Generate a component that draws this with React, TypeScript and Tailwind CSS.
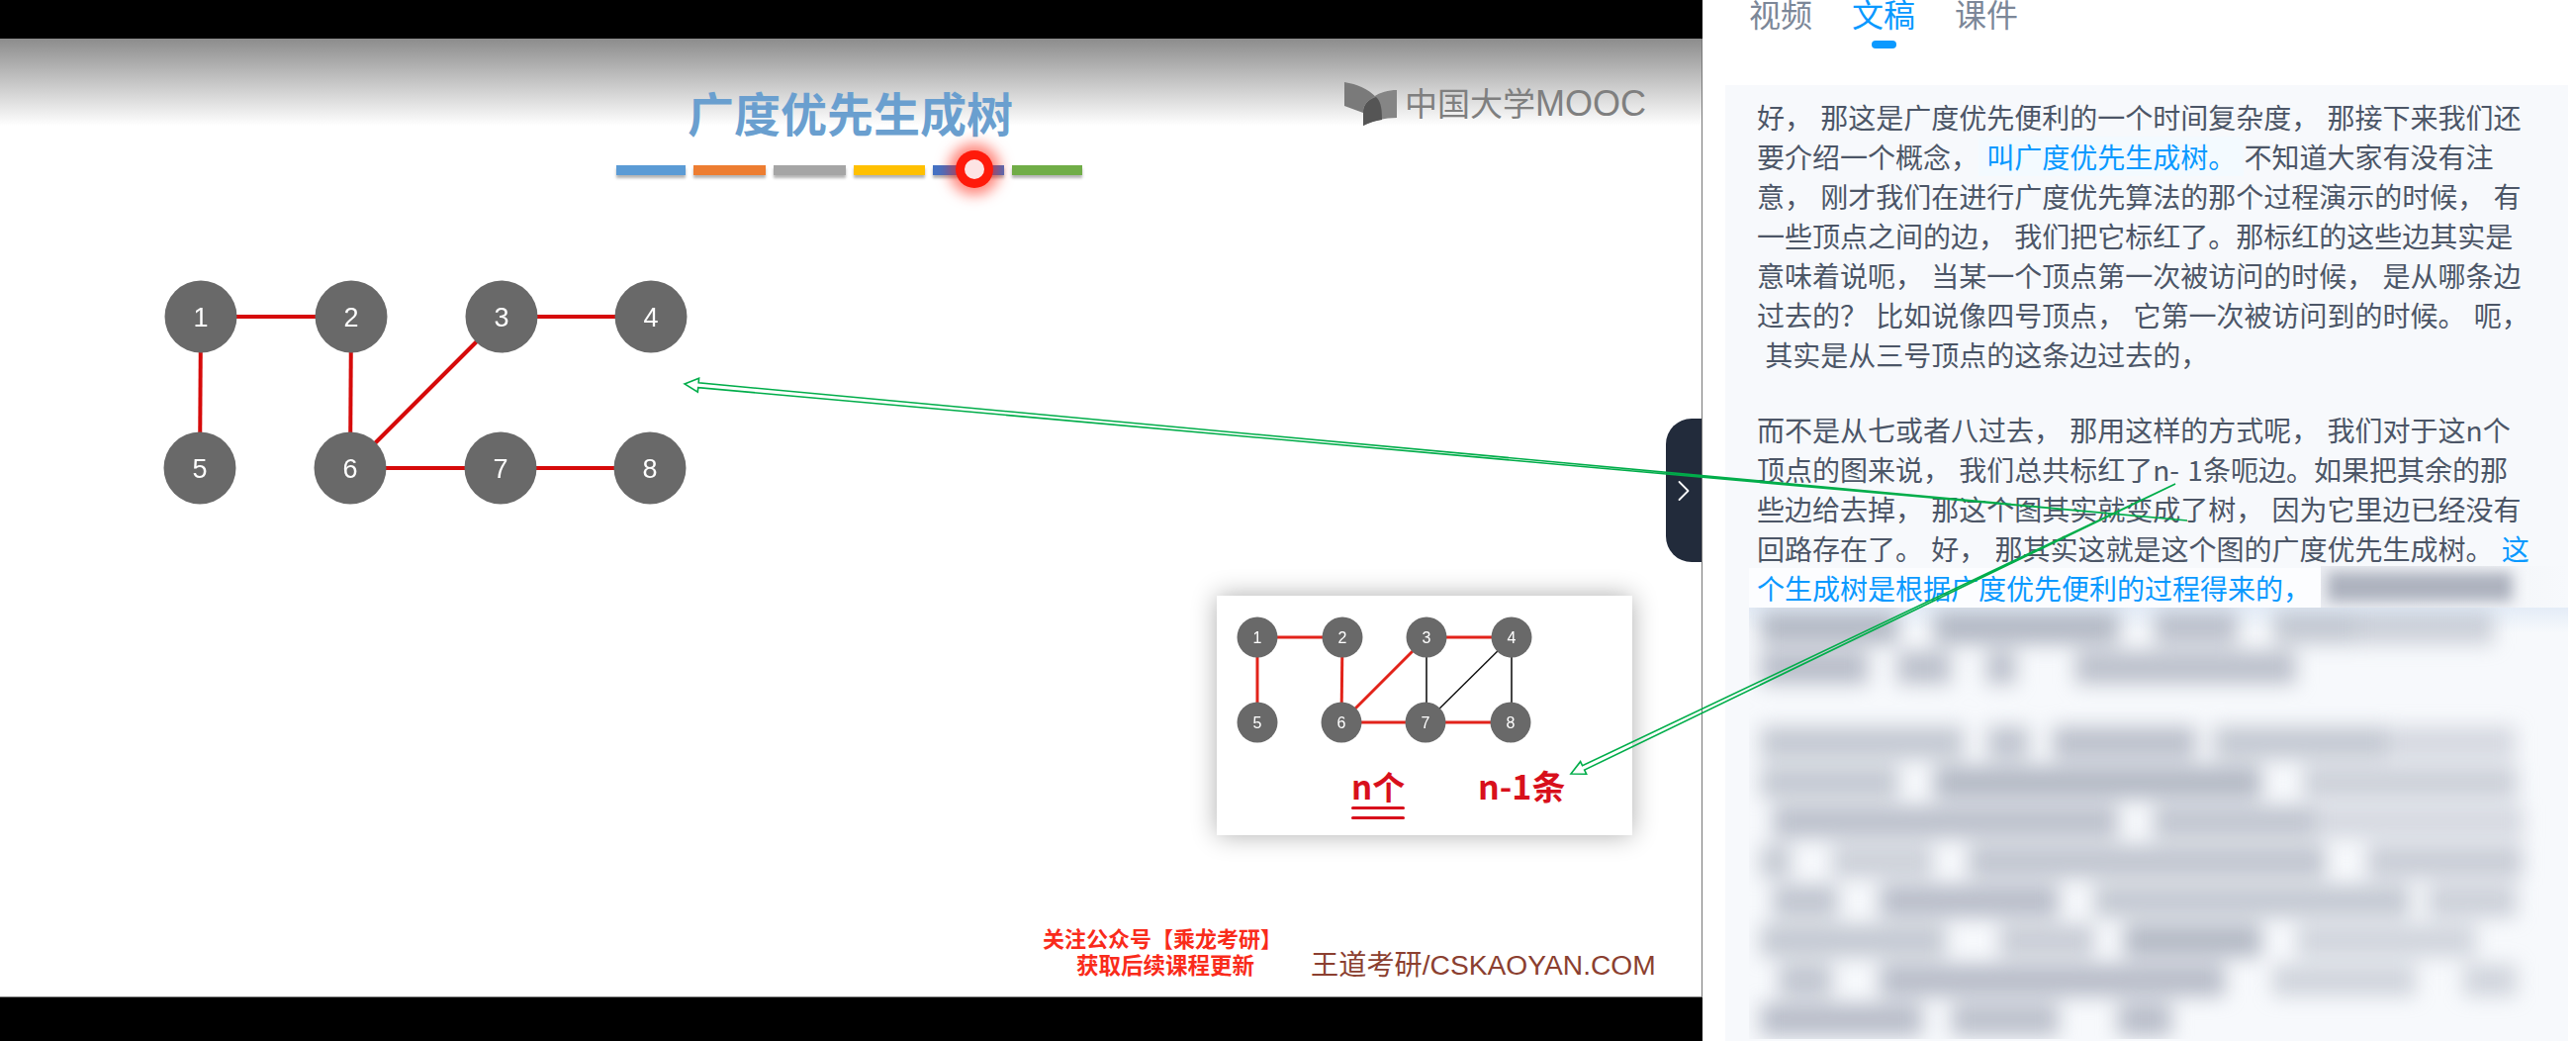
import { ChevronRight } from "lucide-react";

type Pt = [number, number];

const EDGES: [Pt, Pt][] = [
  [[203, 45], [355, 45]],
  [[507, 45], [658, 45]],
  [[203, 45], [202, 198]],
  [[355, 45], [354, 198]],
  [[507, 45], [354, 198]],
  [[354, 198], [506, 198]],
  [[506, 198], [657, 198]],
];

const NODES: [string, number, number][] = [
  ["1", 203, 45],
  ["2", 355, 45],
  ["3", 507, 45],
  ["4", 658, 45],
  ["5", 202, 198],
  ["6", 354, 198],
  ["7", 506, 198],
  ["8", 657, 198],
];

const THUMB_RED: [Pt, Pt][] = [
  [[41, 42], [127, 42]],
  [[212, 42], [298, 42]],
  [[41, 42], [41, 128]],
  [[127, 42], [126, 128]],
  [[212, 42], [126, 128]],
  [[126, 128], [211, 128]],
  [[211, 128], [297, 128]],
];

const THUMB_NODES: [string, number, number][] = [
  ["1", 41, 42],
  ["2", 127, 42],
  ["3", 212, 42],
  ["4", 298, 42],
  ["5", 41, 128],
  ["6", 126, 128],
  ["7", 211, 128],
  ["8", 297, 128],
];

const BARS = [
  "w-[70px] bg-[#5b9bd5]",
  "w-[73px] bg-[#ed7d31]",
  "w-[73px] bg-[#a5a5a5]",
  "w-[72px] bg-[#ffc000]",
  "w-[72px] bg-[#4472c4]",
  "w-[71px] bg-[#70ad47]",
];

const PARA_ONE = [
  "好， 那这是广度优先便利的一个时间复杂度， 那接下来我们还",
  null,
  "意， 刚才我们在进行广度优先算法的那个过程演示的时候， 有",
  "一些顶点之间的边， 我们把它标红了。那标红的这些边其实是",
  "意味着说呃， 当某一个顶点第一次被访问的时候， 是从哪条边",
  "过去的？ 比如说像四号顶点， 它第一次被访问到的时候。 呃，",
  " 其实是从三号顶点的这条边过去的，",
];

const PARA_TWO = [
  "而不是从七或者八过去， 那用这样的方式呢， 我们对于这n个",
  "顶点的图来说， 我们总共标红了n- 1条呃边。如果把其余的那",
  "些边给去掉， 那这个图其实就变成了树， 因为它里边已经没有",
];

// blurred transcript: [gap before, width, darkness]
const BLUR_TOP: [number, number, number][][] = [
  [[12, 139, 0.8], [36, 187, 0.8], [36, 84, 0.7], [36, 84, 0.6], [0, 139, 0.5]],
  [[12, 108, 0.75], [30, 54, 0.7], [36, 30, 0.7], [60, 223, 0.7]],
];

const BLUR_BOTTOM: [number, number, number][][] = [
  [[12, 205, 0.6], [24, 42, 0.65], [24, 145, 0.7], [18, 175, 0.6], [0, 130, 0.4]],
  [[12, 139, 0.6], [36, 331, 0.8], [42, 217, 0.5]],
  [[24, 349, 0.7], [36, 163, 0.65], [0, 211, 0.4]],
  [[12, 30, 0.6], [42, 102, 0.5], [36, 361, 0.65], [42, 157, 0.55]],
  [[24, 66, 0.65], [42, 181, 0.75], [36, 319, 0.6], [18, 90, 0.5]],
  [[12, 187, 0.6], [54, 96, 0.55], [30, 139, 0.8], [36, 181, 0.45]],
  [[30, 54, 0.65], [48, 349, 0.75], [48, 145, 0.45], [48, 54, 0.45]],
  [[12, 163, 0.75], [30, 108, 0.7], [60, 54, 0.75]],
];

function arrowPoints(tip: Pt, tail: Pt, shaft: number) {
  const dx = tail[0] - tip[0];
  const dy = tail[1] - tip[1];
  const len = Math.hypot(dx, dy);
  const ux = dx / len;
  const uy = dy / len;
  const bx = tip[0] + ux * 14;
  const by = tip[1] + uy * 14;
  const off = (d: number) => `${bx - uy * d},${by + ux * d}`;
  return [
    tip.join(","),
    off(-7),
    off(-shaft),
    tail.join(","),
    off(shaft),
    off(7),
  ].join(" ");
}

function BlurLine({ segs }: { segs: [number, number, number][] }) {
  return (
    <div className="flex h-10 items-center">
      {segs.map(([gap, width, dark], i) => (
        <div
          key={i}
          className="h-[33px] shrink-0 bg-[#a4aab8]"
          style={{ marginLeft: gap, width, opacity: dark }}
        />
      ))}
    </div>
  );
}

function Slide() {
  return (
    <div className="h-[969px] overflow-hidden border-r border-b border-[#777777] bg-white bg-[linear-gradient(to_bottom,#8c8c8c_0px,#ffffff_88px)] font-['Noto_Sans_CJK_SC',sans-serif]">
      <div className="flex items-start pt-[47px] pl-[695px]">
        <h1 className="w-[329px] text-[47px] leading-[54px] font-bold whitespace-nowrap text-[#6a9fcf]">
          广度优先生成树
        </h1>
        <div className="ml-[335px] -mt-[3px] flex items-start gap-[7px]">
          <svg width="54" height="45" viewBox="0 0 54 45">
            <path d="M0 0 C13 2 24 7 32 15 C23 18 19 23 19 31 L0 24 Z" fill="#7a7a7a" />
            <path d="M53 8 L53 36 C41 36 28 39 19 44 L19 31 C19 18 36 8 53 8 Z" fill="#858585" />
            <path d="M32 15 C36 19 38 24 38 38 C31 39 25 41 19 44 L19 31 C19 23 23 18 32 15 Z" fill="#555555" />
          </svg>
          <span className="mt-[-2px] text-[33px] leading-[44px] whitespace-nowrap text-[#7f7f7f]">
            中国大学<span className="font-['Liberation_Sans',sans-serif] text-[36px]">MOOC</span>
          </span>
        </div>
      </div>

      <div className="relative mt-[27px] flex h-[10px] gap-[8px] pl-[623px]">
        {BARS.map((bar) => (
          <div key={bar} className={`h-[10px] shadow-[0_3px_3px_rgba(0,0,0,0.3)] ${bar}`} />
        ))}
        <div className="absolute top-[-15px] left-[966px] flex h-[38px] w-[38px] items-center justify-center rounded-full bg-[#ff1a0a] shadow-[0_0_14px_7px_rgba(255,30,10,0.55)]">
          <div className="h-[20px] w-[20px] rounded-full bg-[#fde4e4]" />
        </div>
      </div>

      <svg className="mt-[98px] blur-[0.4px]" width="700" height="240" viewBox="0 0 700 240">
        {EDGES.map(([a, b], i) => (
          <line key={i} x1={a[0]} y1={a[1]} x2={b[0]} y2={b[1]} stroke="#d60a0a" strokeWidth="4" />
        ))}
        {NODES.map(([label, x, y]) => (
          <g key={label}>
            <circle cx={x} cy={y} r="36.5" fill="#696969" />
            <text
              x={x}
              y={y + 10}
              textAnchor="middle"
              fontSize="27"
              fill="#ffffff"
              fontFamily="Liberation Sans, sans-serif"
            >
              {label}
            </text>
          </g>
        ))}
      </svg>

      <div className="mt-[87px] ml-[1230px] h-[242px] w-[420px] bg-white shadow-[0_0_24px_rgba(0,0,0,0.32)]">
        <svg className="block blur-[0.3px]" width="420" height="172" viewBox="0 0 420 172">
          {THUMB_RED.map(([a, b], i) => (
            <line key={i} x1={a[0]} y1={a[1]} x2={b[0]} y2={b[1]} stroke="#e2231a" strokeWidth="3" />
          ))}
          <line x1="212" y1="42" x2="212" y2="128" stroke="#444444" strokeWidth="2" />
          <line x1="298" y1="42" x2="298" y2="128" stroke="#444444" strokeWidth="2" />
          <line x1="298" y1="42" x2="211" y2="128" stroke="#111111" strokeWidth="1.5" />
          {THUMB_NODES.map(([label, x, y]) => (
            <g key={label}>
              <circle cx={x} cy={y} r="20.5" fill="#696969" />
              <text
                x={x}
                y={y + 6}
                textAnchor="middle"
                fontSize="16"
                fill="#ffffff"
                fontFamily="Liberation Sans, sans-serif"
              >
                {label}
              </text>
            </g>
          ))}
        </svg>
        <div className="flex items-start pl-[136px] text-[#d8101c]">
          <div className="w-[54px]">
            <div className="h-[40px] text-[33px] leading-[40px] font-bold whitespace-nowrap">n个</div>
            <div className="mt-[1px] h-[3px] rounded-full bg-[#d8101c]" />
            <div className="mt-[7px] h-[3px] rounded-full bg-[#d8101c]" />
          </div>
          <div className="ml-[74px] text-[34px] leading-[40px] font-bold whitespace-nowrap">n-1条</div>
        </div>
      </div>

      <div className="mt-[92px] flex items-end pl-[1054px] font-['Liberation_Sans','Noto_Sans_CJK_SC',sans-serif]">
        <div className="w-[240px] text-center text-[22px] leading-[27px] font-bold whitespace-nowrap text-[#f92b1b]">
          <div>关注公众号【乘龙考研】</div>
          <div className="pl-2 text-[22.5px]">获取后续课程更新</div>
        </div>
        <div className="ml-[31px] text-[28.2px] leading-[30px] whitespace-nowrap text-[#8b3f30]">
          王道考研/CSKAOYAN.COM
        </div>
      </div>
    </div>
  );
}

function Transcript() {
  return (
    <div className="ml-[23px] mr-[8px] mt-[30px] h-[966px] overflow-hidden bg-[#f7f9fc] pt-3 pl-8 text-[28px] leading-10 [word-spacing:2px] text-[#4c5667]">
      <div className="mb-9">
        {PARA_ONE.map((line, i) =>
          line === null ? (
            <div key={i} className="h-10 whitespace-pre">
              要介绍一个概念， <span className="mx-[-8px] bg-[#f3faff] px-2 text-[#0a99ff]">叫广度优先生成树。</span> 不知道大家有没有注
            </div>
          ) : (
            <div key={i} className="h-10 whitespace-pre">
              {line}
            </div>
          )
        )}
      </div>

      {PARA_TWO.map((line) => (
        <div key={line} className="h-10 whitespace-pre">
          {line}
        </div>
      ))}
      <div className="h-10 whitespace-pre">
        回路存在了。 好， 那其实这就是这个图的广度优先生成树。 <span className="text-[#0a99ff]">这</span>
      </div>
      <div className="flex h-10">
        <div className="-ml-2 w-[578px] shrink-0 bg-[#fcfdff] pl-2 whitespace-pre text-[#0a99ff]">
          个生成树是根据广度优先便利的过程得来的，
        </div>
        <div className="-mt-[2px] h-[42px] w-[250px] shrink-0 overflow-hidden bg-[linear-gradient(to_right,#eceef3,#f7f9fc)]">
          <div className="mt-[6px] ml-[7px] h-[30px] w-[187px] bg-[#adb2be] blur-[7px]" />
        </div>
      </div>

      <div className="-ml-2 overflow-hidden bg-[linear-gradient(to_bottom,#e4ecf7,#f7f9fc_26px)]">
        <div className="blur-[10px]">
          {BLUR_TOP.map((segs, i) => (
            <BlurLine key={i} segs={segs} />
          ))}
          <div className="h-9" />
          {BLUR_BOTTOM.map((segs, i) => (
            <BlurLine key={i} segs={segs} />
          ))}
        </div>
      </div>
    </div>
  );
}

export default function App() {
  return (
    <div className="relative flex h-[1052px] w-[2604px] overflow-hidden bg-white">
      <div className="w-[1721px] shrink-0">
        <div className="h-[39px] bg-black" />
        <Slide />
        <div className="h-[44px] bg-black" />
      </div>

      <div className="min-w-0 flex-1 font-['Noto_Sans_CJK_SC',sans-serif]">
        {/* page is scrolled a little, so the tab labels lose their top edge */}
        <div className="relative flex h-[56px] items-start pl-[47px]">
          <div className="-mt-[10px] flex gap-[40px] text-[32px] leading-[46px] text-[#7c8798]">
            <span>视频</span>
            <span className="text-[#0a99ff]">文稿</span>
            <span>课件</span>
          </div>
          <div className="absolute top-[41px] left-[171px] h-[8px] w-[25px] rounded-full bg-[#0a99ff]" />
        </div>
        <Transcript />
      </div>

      {/* collapse handle sits over the seam between the panes */}
      <div className="absolute top-[423px] left-[1684px] flex h-[145px] w-[36px] items-center justify-center rounded-l-[26px] bg-[#222b3b] text-white">
        <ChevronRight className="h-[46px] w-[46px]" strokeWidth={1.2} />
      </div>

      {/* pen annotations are drawn over the whole window */}
      <svg className="pointer-events-none absolute inset-0" width="2604" height="1052" viewBox="0 0 2604 1052">
        <polygon
          points={arrowPoints([692, 388], [2211, 526], 2.4)}
          fill="none"
          stroke="#00ad4a"
          strokeWidth="1.6"
        />
        <polygon
          points={arrowPoints([1588, 782], [2199, 489], 2.4)}
          fill="none"
          stroke="#00ad4a"
          strokeWidth="1.6"
        />
      </svg>
    </div>
  );
}
